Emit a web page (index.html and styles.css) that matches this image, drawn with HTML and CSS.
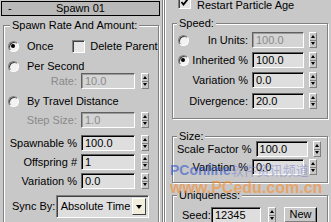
FILE: index.html
```html
<!DOCTYPE html>
<html>
<head>
<meta charset="utf-8">
<link rel="stylesheet" href="styles.css">
</head>
<body>
<div class="app">
  <div class="left">
    <div class="rollbar"><span class="minus">-</span><span class="rtitle">Spawn 01</span></div>
    <fieldset class="grp g-spawn">
      <legend>Spawn Rate And Amount:</legend>
      <div class="row r1"><span class="radio on"></span><span class="rtext">Once</span><span class="chk"></span><span class="ctext">Delete Parent</span></div>
      <div class="row r2"><span class="radio"></span><span class="rtext">Per Second</span></div>
      <div class="frow r3"><span class="lbl dis">Rate:</span><span class="field dis">10.0</span><span class="spin"><i></i><i></i></span></div>
      <div class="row r4"><span class="radio"></span><span class="rtext">By Travel Distance</span></div>
      <div class="frow r5"><span class="lbl dis">Step Size:</span><span class="field dis">1.0</span><span class="spin"><i></i><i></i></span></div>
      <div class="frow r6"><span class="lbl">Spawnable %</span><span class="field">100.0</span><span class="spin"><i></i><i></i></span></div>
      <div class="frow r7"><span class="lbl">Offspring #</span><span class="field">1</span><span class="spin"><i></i><i></i></span></div>
      <div class="frow r8"><span class="lbl">Variation %</span><span class="field">0.0</span><span class="spin"><i></i><i></i></span></div>
      <div class="drow r9"><span class="dlbl">Sync By:</span><span class="combo"><span class="ctxt">Absolute Time</span><span class="cbtn"></span></span></div>
    </fieldset>
  </div>
  <div class="divider"></div>
  <div class="right">
    <div class="row rr0"><span class="chk on"><svg width="9" height="9" viewBox="0 0 9 9"><path d="M1.5 4 L3.5 6.5 L7.5 1.5" stroke="#000" stroke-width="1.8" fill="none"/></svg></span><span class="ctext">Restart Particle Age</span></div>
    <fieldset class="grp g-speed">
      <legend>Speed:</legend>
      <div class="frow s1"><span class="radio"></span><span class="lbl">In Units:</span><span class="field dis">100.0</span><span class="spin"><i></i><i></i></span></div>
      <div class="frow s2"><span class="radio on"></span><span class="lbl">Inherited %</span><span class="field">100.0</span><span class="spin"><i></i><i></i></span></div>
      <div class="frow s3"><span class="lbl">Variation %</span><span class="field">0.0</span><span class="spin"><i></i><i></i></span></div>
      <div class="frow s4"><span class="lbl">Divergence:</span><span class="field">20.0</span><span class="spin"><i></i><i></i></span></div>
    </fieldset>
    <fieldset class="grp g-size">
      <legend>Size:</legend>
      <div class="frow z1"><span class="lbl">Scale Factor %</span><span class="field">100.0</span><span class="spin"><i></i><i></i></span></div>
      <div class="frow z2"><span class="lbl">Variation %</span><span class="field">0.0</span><span class="spin"><i></i><i></i></span></div>
    </fieldset>
    <fieldset class="grp g-uniq">
      <legend>Uniqueness:</legend>
      <div class="frow u1"><span class="slbl">Seed:</span><span class="field sfield">12345</span><span class="spin"><i></i><i></i></span><span class="btn">New</span></div>
    </fieldset>
  </div>
</div>
<div class="wm">
  <div class="wm1"><span class="wmb">PConline</span><span class="wmc">软件资讯频道</span></div>
  <div class="wm2">www.PCedu.com.cn</div>
</div>
</body>
</html>
```
FILE: styles.css
```css
* { box-sizing: border-box; }
html, body { margin: 0; padding: 0; }
body {
  width: 331px;
  height: 222px;
  overflow: hidden;
  background: #c8c8c8;
  font-family: "Liberation Sans", Arial, sans-serif;
  font-size: 11px;
  line-height: 13px;
  color: #000;
  position: relative;
}
.app { display: flex; height: 222px; }
.left { width: 160px; padding: 1px 0 0 1px; flex: none; }
.rollbar {
  width: 159px; height: 15px;
  border: 1px solid #000;
  background: #b9b9b9;
  display: flex; align-items: center;
}
.minus { width: 16px; padding-left: 6px; }
.rtitle { flex: 1; text-align: center; padding-right: 16px; }

.grp {
  margin: 0; min-width: 0;
  border: 1px solid #808080;
  box-shadow: inset 1px 1px 0 #fff, 1px 1px 0 #fff;
}
.grp legend {
  padding: 0 2px;
  background: #c8c8c8;
  line-height: 13px; height: 13px;
  white-space: nowrap;
}
.g-spawn { width: 156px; margin: 3px 0 0 2px; padding: 0 9px 40px 4px; }
.g-spawn legend { margin-left: 2px; }

.row { display: flex; align-items: center; height: 13px; white-space: nowrap; }
.frow { display: flex; align-items: center; height: 16px; white-space: nowrap; }
.r1 { margin-top: 8px; }
.r2 { margin-top: 7px; }
.r3 { margin-top: 0; }
.r4 { margin-top: 6px; }
.r5 { margin-top: 4px; }
.r6 { margin-top: 7px; }
.r7 { margin-top: 3px; }
.r8 { margin-top: 3px; }
.r9 { margin-top: 6px; }

.radio {
  flex: none;
  width: 11px; height: 11px; border-radius: 50%;
  background: #f2f2f2;
  border: 1px solid; border-color: #808080 #fff #fff #808080;
  box-shadow: inset 1px 1px 0 #404040;
  position: relative;
}
.radio.on::after {
  content: ""; position: absolute; left: 2px; top: 2px;
  width: 4px; height: 4px; border-radius: 50%; background: #000;
}
.rtext { margin-left: 8px; }
.chk {
  flex: none;
  width: 13px; height: 13px;
  background: #e6e6e6;
  border: 1px solid; border-color: #808080 #fff #fff #808080;
  box-shadow: inset 1px 1px 0 #404040;
  display: flex; align-items: center; justify-content: center;
}
.r1 .chk { margin-left: 19px; }
.ctext { margin-left: 5px; white-space: nowrap; }

.lbl { flex: 1; text-align: right; padding-right: 4px; white-space: nowrap; }
.dis { color: #8a8a8a; }
.field {
  flex: none;
  width: 54px; height: 16px;
  background: #dedede;
  border: 1px solid; border-color: #606060 #fff #fff #606060;
  box-shadow: inset 1px 1px 0 #000;
  padding: 1px 0 0 3px;
  line-height: 13px;
}
.field.dis { box-shadow: inset 1px 1px 0 #9a9a9a; background: #d4d4d4; }
.spin {
  flex: none;
  width: 8px; height: 16px; margin-left: 6px;
  display: flex; flex-direction: column;
  border: 1px solid; border-color: #fff #808080 #808080 #fff;
}
.spin i {
  flex: 1; display: flex; align-items: center; justify-content: center;
}
.spin i:first-child { border-bottom: 1px solid #808080; }
.spin i:first-child::before {
  content: ""; border-left: 2px solid transparent; border-right: 2px solid transparent;
  border-bottom: 3px solid #000;
}
.spin i:last-child::before {
  content: ""; border-left: 2px solid transparent; border-right: 2px solid transparent;
  border-top: 3px solid #000;
}

.drow { display: flex; align-items: center; height: 23px; white-space: nowrap; }
.dlbl { width: 48px; padding-left: 4px; }
.combo {
  width: 94px; height: 23px;
  background: #dedede;
  border: 1px solid; border-color: #808080 #fff #fff #808080;
  box-shadow: inset 1px 1px 0 #404040;
  display: flex; align-items: center; padding: 0 2px 0 4px;
}
.ctxt { flex: 1; }
.cbtn {
  width: 14px; height: 17px;
  background: #f2eedc;
  border: 1px solid; border-color: #fff #404040 #404040 #fff;
  display: flex; align-items: center; justify-content: center;
}
.cbtn::before {
  content: ""; border-left: 3px solid transparent; border-right: 3px solid transparent;
  border-top: 4px solid #000;
}

.divider {
  width: 7px; flex: none;
  border-left: 2px solid #c8c8c8;
  box-shadow: inset 1px 0 0 #808080, inset 2px 0 0 #fff, inset 3px 0 0 #808080, inset 4px 0 0 #fff;
}
.right { width: 164px; flex: none; }
.rr0 { margin-top: -4px; padding-left: 11px; align-items: flex-start; height: 13px; }
.rr0 .ctext { margin-left: 6px; margin-top: 3px; }

.g-speed { width: 156px; margin: 8px 0 0 5px; padding: 0 10px 9px 4px; }
.g-speed legend { margin-left: 0; }
.s1 { margin-top: 2px; }
.s2, .s3 { margin-top: 4px; }
.s4 { margin-top: 5px; }
.g-speed .radio { margin-left: 1px; }
.right .field { width: 52px; }
.right .spin { margin-left: 5px; }

.g-size { width: 156px; margin: 11px 0 0 5px; padding: 0 10px 7px 4px; }
.z1 { margin-top: -2px; }
.z2 { margin-top: 2px; }
.g-uniq { width: 156px; margin: 6px 0 0 5px; padding: 0 10px 20px 4px; }
.u1 { margin-top: 5px; }
.slbl { margin-left: 5px; width: 30px; }
.sfield { width: 50px !important; }
.u1 .spin { margin-left: 7px; }
.btn {
  flex: none;
  margin-left: 8px; width: 33px; height: 16px;
  border: 1px solid; border-color: #fff #000 #000 #fff;
  box-shadow: inset -1px -1px 0 #808080;
  text-align: center; line-height: 13px;
}

.wm { position: absolute; left: 170px; top: 163px; pointer-events: none; }
.wm1 { font-size: 14px; line-height: 14px; font-weight: bold; white-space: nowrap; }
.wmb { color: rgba(50, 85, 205, 0.6); }
.wmc { color: rgba(110, 120, 200, 0.5); font-family: "Noto Sans CJK SC", sans-serif; font-weight: normal; font-size: 13px; }
.wm2 { font-size: 16px; line-height: 16px; font-weight: bold; color: rgba(250, 140, 40, 0.6); margin-top: 3px; white-space: nowrap; }
```
